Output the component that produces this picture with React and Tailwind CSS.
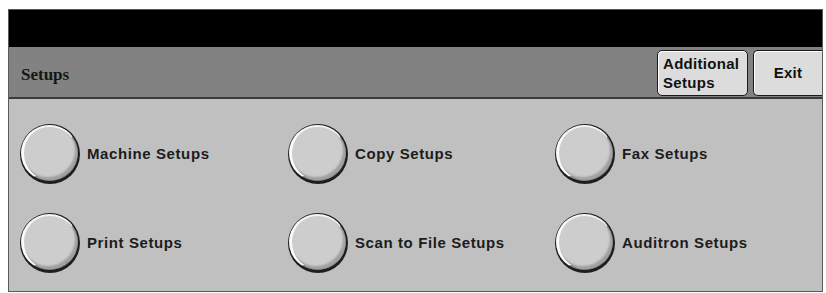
import React from "react";

const items = [
  "Machine Setups",
  "Copy Setups",
  "Fax Setups",
  "Print Setups",
  "Scan to File Setups",
  "Auditron Setups",
];

// Round bevelled selector button
const RoundButton = () => (
  <div className="w-[60px] h-[60px] rounded-full bg-[#1e1e1e] shrink-0 pt-[1px] pl-[1px] pr-[2px] pb-[3px]">
    <div className="w-full h-full rounded-full bg-[#cdcdcd] border-t-[2px] border-l-[3px] border-r-[1px] border-b-[1px] border-t-[#f4f4f4] border-l-[#fafafa] border-r-[#8e8e8e] border-b-[#7e7e7e] shadow-[inset_-2px_-3px_2px_#a0a0a0]" />
  </div>
);

const App = () => {
  return (
    <div className="w-[826px] h-[293px] bg-white pt-[9px] pl-[8px] font-['Liberation_Sans',Arial,sans-serif]">
      <div className="w-[815px] h-[283px] flex flex-col border border-[#5a5a5a]">
        {/* Title bar */}
        <div className="h-[37px] bg-black" />

        {/* Header row */}
        <div className="h-[52px] bg-[#828282] border-b-2 border-[#3a3a3a] flex items-center">
          <div className="pl-[12px] pt-[5px] flex-1 font-['Liberation_Serif',serif] font-bold text-[17px] text-[#151515]">
            Setups
          </div>
          <button className="w-[91px] h-[46px] mt-[2px] mr-[5px] rounded-[5px] bg-[#dcdcdc] border border-[#1a1a1a] shadow-[inset_1px_1px_0_#fff] text-left pl-[5px] leading-[19px] font-bold text-[15px] tracking-[0.3px] text-[#111]">
            Additional
            <br />
            Setups
          </button>
          <button className="w-[69px] h-[46px] mt-[2px] rounded-l-[5px] bg-[#dcdcdc] border border-r-0 border-[#1a1a1a] shadow-[inset_1px_1px_0_#fff] font-bold text-[15px] tracking-[0.3px] text-[#111]">
            Exit
          </button>
        </div>

        {/* Options */}
        <div className="flex-1 bg-[#c0c0c0] grid grid-cols-[268px_267px_1fr] content-start gap-y-[29px] pt-[25px] pl-[11px]">
          {items.map((label) => (
            <div key={label} className="flex items-center gap-[7px]">
              <RoundButton />
              <span className="font-bold text-[15px] text-[#1c1c1c] tracking-[0.6px]">{label}</span>
            </div>
          ))}
        </div>
      </div>
    </div>
  );
};

export default App;
